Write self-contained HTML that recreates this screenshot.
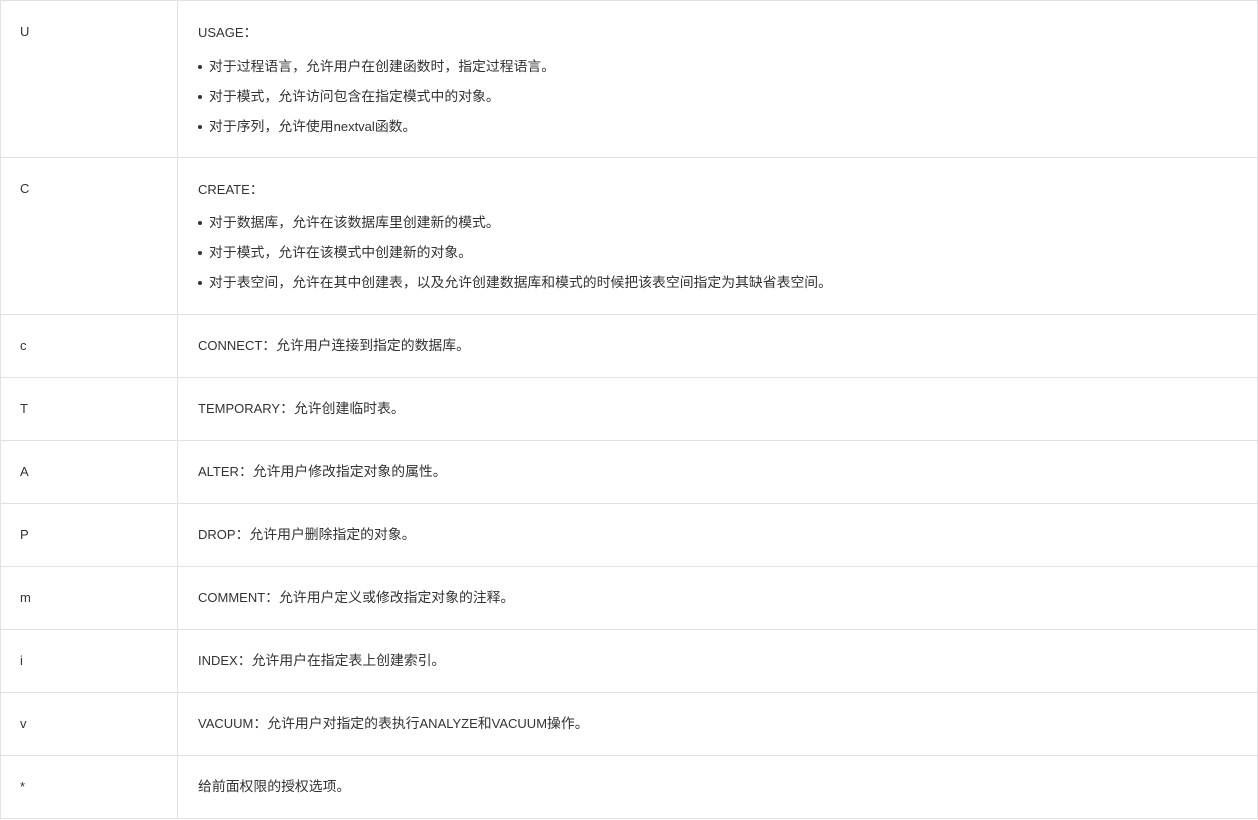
<!DOCTYPE html>
<html><head><meta charset="utf-8"><style>
html,body{margin:0;padding:0;background:#fff;}
body{width:1258px;height:820px;position:relative;overflow:hidden;font-family:"Liberation Sans","Noto Sans CJK SC",sans-serif;font-size:13px;color:#333;}
.h{position:absolute;left:0;width:1258px;height:1px;background:#dfe1e6;}
.v{position:absolute;top:0;width:1px;height:819px;background:#dfe1e6;}
.t{position:absolute;line-height:20px;white-space:nowrap;}
.t span,.b span{font-size:13.85px;}
.b{position:absolute;line-height:20px;white-space:nowrap;left:197px;}
.b:before{content:"";display:inline-block;width:4px;height:4px;border-radius:2px;background:#333;vertical-align:middle;margin:0 7px 2px 1px;}
</style></head><body>
<div class="h" style="top:0"></div>
<div class="h" style="top:157px"></div>
<div class="h" style="top:314px"></div>
<div class="h" style="top:377px"></div>
<div class="h" style="top:440px"></div>
<div class="h" style="top:503px"></div>
<div class="h" style="top:566px"></div>
<div class="h" style="top:629px"></div>
<div class="h" style="top:692px"></div>
<div class="h" style="top:755px"></div>
<div class="h" style="top:818px"></div>
<div class="v" style="left:0"></div>
<div class="v" style="left:177px"></div>
<div class="v" style="left:1257px"></div>

<div class="t" style="left:20px;top:22px">U</div>
<div class="t" style="left:198px;top:22px">USAGE<span>：</span></div>
<div class="b" style="top:56px"><span>对于过程语言，允许用户在创建函数时，指定过程语言。</span></div>
<div class="b" style="top:86px"><span>对于模式，允许访问包含在指定模式中的对象。</span></div>
<div class="b" style="top:116px"><span>对于序列，允许使用</span>nextval<span>函数。</span></div>

<div class="t" style="left:20px;top:179px">C</div>
<div class="t" style="left:198px;top:179px">CREATE<span>：</span></div>
<div class="b" style="top:212px"><span>对于数据库，允许在该数据库里创建新的模式。</span></div>
<div class="b" style="top:242px"><span>对于模式，允许在该模式中创建新的对象。</span></div>
<div class="b" style="top:272px"><span>对于表空间，允许在其中创建表，以及允许创建数据库和模式的时候把该表空间指定为其缺省表空间。</span></div>

<div class="t" style="left:20px;top:336px">c</div>
<div class="t" style="left:198px;top:335px">CONNECT<span>：允许用户连接到指定的数据库。</span></div>
<div class="t" style="left:20px;top:399px">T</div>
<div class="t" style="left:198px;top:398px">TEMPORARY<span>：允许创建临时表。</span></div>
<div class="t" style="left:20px;top:462px">A</div>
<div class="t" style="left:198px;top:461px">ALTER<span>：允许用户修改指定对象的属性。</span></div>
<div class="t" style="left:20px;top:525px">P</div>
<div class="t" style="left:198px;top:524px">DROP<span>：允许用户删除指定的对象。</span></div>
<div class="t" style="left:20px;top:588px">m</div>
<div class="t" style="left:198px;top:587px">COMMENT<span>：允许用户定义或修改指定对象的注释。</span></div>
<div class="t" style="left:20px;top:651px">i</div>
<div class="t" style="left:198px;top:650px">INDEX<span>：允许用户在指定表上创建索引。</span></div>
<div class="t" style="left:20px;top:714px">v</div>
<div class="t" style="left:198px;top:713px">VACUUM<span>：允许用户对指定的表执行</span>ANALYZE<span>和</span>VACUUM<span>操作。</span></div>
<div class="t" style="left:20px;top:777px">*</div>
<div class="t" style="left:198px;top:776px"><span>给前面权限的授权选项。</span></div>
</body></html>
